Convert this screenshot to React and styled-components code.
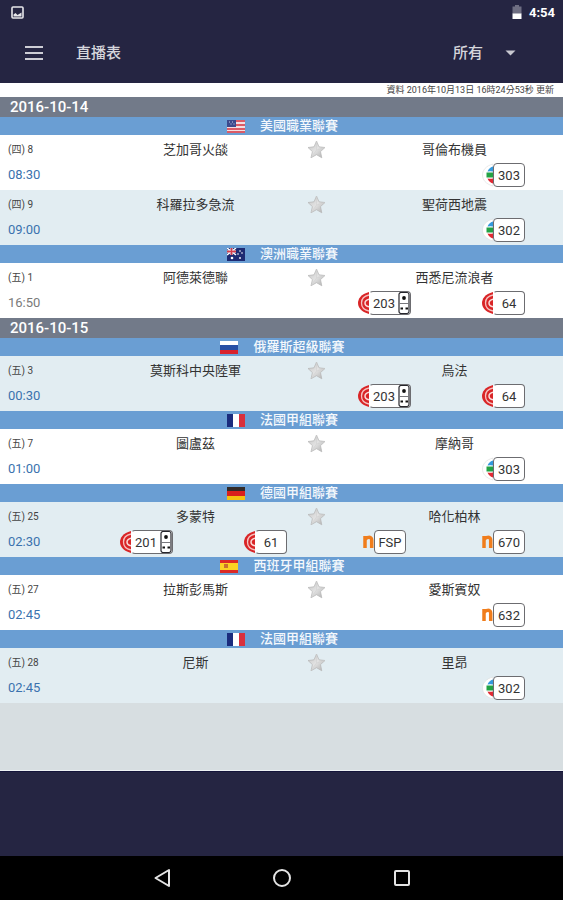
import React from "react";
import styled, { createGlobalStyle, css } from "styled-components";

const latin = `Roboto, "Noto Sans CJK TC", sans-serif`;

const GlobalStyle = createGlobalStyle`
  *, *::before, *::after { box-sizing: border-box; }
  body { margin: 0; background: #252542; font-family: ${latin}; }
  button, select { font: inherit; color: inherit; }
`;

const Page = styled.div`
  min-height: 100vh;
  display: flex;
  flex-direction: column;
  background: #252542;
`;

const StatusBar = styled.div`
  height: 24px;
  padding: 0 8px 0 11px;
  display: flex;
  align-items: center;
  justify-content: space-between;
  color: #fff;
`;

const StatusInfo = styled.div`
  display: flex;
  align-items: center;
  gap: 7px;
  font-size: 13px;
  font-weight: 700;
`;

const Toolbar = styled.header`
  height: 59px;
  padding: 0 47px 2px 24px;
  display: flex;
  align-items: center;
  color: #d6d6dc;
`;

const IconButton = styled.button`
  display: flex;
  align-items: center;
  justify-content: center;
  padding: 0;
  border: 0;
  background: none;
  cursor: pointer;
`;

const Title = styled.h1`
  flex: 1;
  margin: 0 0 0 32px;
  font-size: 15px;
  line-height: 20px;
  font-weight: 500;
`;

const Filter = styled.label`
  display: grid;
  grid-template-columns: 1fr auto;
  align-items: center;
  font-size: 15px;
  font-weight: 500;

  select {
    grid-area: 1 / 1 / 2 / 3;
    appearance: none;
    border: 0;
    padding: 0 32px 0 0;
    background: transparent;
    line-height: 20px;
    cursor: pointer;
  }
  option { color: #222; }
  svg { grid-area: 1 / 2; pointer-events: none; }
`;

const Content = styled.main`
  flex: 1;
  background: #d7dee1;
  border-bottom: 1px solid #eef2f3;
`;

const Updated = styled.p`
  height: 14px;
  margin: 0;
  padding: 0 9px;
  background: #fff;
  color: #444;
  font-size: 9px;
  line-height: 14px;
  text-align: right;
`;

const Schedule = styled.table`
  width: 100%;
  table-layout: fixed;
  border-collapse: collapse;

  td, th { padding: 0; }
`;

const InfoCol = styled.col`
  width: 87px;
`;

const StarCol = styled.col`
  width: 42px;
`;

const DateCell = styled.th`
  height: 20px;
  background: #727a89;
  color: #fff;
  font-size: 15px;
  line-height: 20px;
  font-weight: 500;
  text-align: left;

  && { padding-left: 10px; }
`;

const LeagueCell = styled.th`
  height: 18px;
  background: #6a9ed3;
  color: #f4f8fc;
  font-size: 13px;
  line-height: 18px;
  font-weight: 500;
`;

const LeagueName = styled.div`
  height: 18px;
  padding-left: 2px;
  display: flex;
  align-items: center;
  justify-content: center;
  gap: 15px;
`;

const Match = styled.tbody`
  background: ${(p) => (p.$tinted ? "#e2edf2" : "#fff")};
`;

const Number = styled.td`
  height: 28px;
  font-size: 10px;
  line-height: 26px;
  color: #444;

  && { padding: 2px 0 0 8px; }
`;

const Team = styled.td`
  height: 28px;
  font-size: 13px;
  line-height: 26px;
  color: #333;
  text-align: center;

  && { padding-top: 2px; }
`;

const StarCell = styled.td`
  height: 28px;
  vertical-align: middle;

  button { margin-left: 3px; }
`;

const Time = styled.td`
  height: 27px;
  font-size: 13px;
  line-height: 24px;
  vertical-align: top;
  color: ${(p) => (p.$past ? "#7a7a7a" : "#3a72ae")};

  && { padding-left: 8px; }
`;

const ChannelCell = styled.td`
  height: 27px;
  vertical-align: top;
`;

const Channels = styled.div`
  display: grid;
  grid-template-columns: repeat(4, 1fr);
  height: 27px;
  align-items: start;
`;

const columns = { 1: "4", 2: "3", 3: "2", 4: "1" };

const Channel = styled.span`
  grid-column-start: ${(p) => columns[p.$fromEnd]};
  grid-row: 1;
  display: flex;
  align-items: center;
  justify-content: center;
`;

const ChannelBox = styled.span`
  height: 24px;
  width: ${(p) => (p.$remote ? "42px" : "32px")};
  display: flex;
  align-items: center;
  border: 1px solid #6c6c70;
  border-radius: 4px;
  background: #fff;
  overflow: hidden;
  color: #333;
  font-size: 13px;

  span { flex: 1; text-align: center; }
  ${(p) =>
    p.$red &&
    css`
      border-left-color: #fff;
    `}
`;

const BottomPanel = styled.div`
  height: 85px;
  border-top: 1px solid #14143a;
`;

const NavBar = styled.nav`
  height: 44px;
  background: #000;
  display: flex;
  justify-content: center;

  button { width: 120px; }
`;

const Flag = ({ code }) => (
  <svg width="18" height="13" viewBox="0 0 18 13" aria-hidden="true">
    {code === "us" && (
      <>
        <rect width="18" height="13" fill="#f4dfe2" />
        {[0, 4, 8].map((y) => (
          <rect key={y} y={y} width="18" height="2" fill="#dc5b66" />
        ))}
        <rect y="11" width="18" height="2" fill="#dc5b66" />
        <rect width="9" height="7" fill="#3c4a8c" />
        <path d="M2 2h1M5 2h1M3.500 4h1M6.500 4h1" stroke="#c5cbe4" />
      </>
    )}
    {code === "au" && (
      <>
        <rect width="18" height="13" fill="#1d2a72" />
        <path d="M0 0L9 7M9 0L0 7" stroke="#fff" strokeWidth="1.500" />
        <path d="M4.500 0V7M0 3.500H9" stroke="#f3c6cc" strokeWidth="2.500" />
        <path d="M4.500 0V7M0 3.500H9" stroke="#d33d4b" strokeWidth="1.300" />
        <circle cx="5" cy="10" r="1.300" fill="#fff" />
        <circle cx="13" cy="3" r="0.800" fill="#fff" />
        <circle cx="11" cy="6" r="0.800" fill="#fff" />
        <circle cx="15" cy="5" r="0.800" fill="#fff" />
        <circle cx="13" cy="10" r="0.900" fill="#fff" />
      </>
    )}
    {code === "ru" && (
      <>
        <rect width="18" height="5" fill="#fff" />
        <rect y="4" width="18" height="5" fill="#2750a5" />
        <rect y="9" width="18" height="4" fill="#d9222c" />
      </>
    )}
    {code === "fr" && (
      <>
        <rect width="18" height="13" fill="#fff" />
        <rect width="6" height="13" fill="#1b2c7d" />
        <rect x="12" width="6" height="13" fill="#d9303d" />
      </>
    )}
    {code === "de" && (
      <>
        <rect width="18" height="5" fill="#332b28" />
        <rect y="4" width="18" height="5" fill="#da201c" />
        <rect y="9" width="18" height="4" fill="#f5c211" />
      </>
    )}
    {code === "es" && (
      <>
        <rect width="18" height="13" fill="#dc2a25" />
        <rect y="3" width="18" height="7" fill="#fbd324" />
        <rect x="4" y="4" width="4" height="4" fill="#c9722f" />
      </>
    )}
  </svg>
);

const Star = () => (
  <svg width="19" height="19" viewBox="0 0 19 19" aria-hidden="true">
    <defs>
      <linearGradient id="silver" x1="0" y1="0" x2="1" y2="1">
        <stop offset="0" stopColor="#c4c4c4" />
        <stop offset="0.5" stopColor="#e2e2e2" />
        <stop offset="1" stopColor="#adadad" />
      </linearGradient>
    </defs>
    <path
      d="M9.500 1L12 6.800L18 7.500L13.500 11.600L14.800 17.800L9.500 14.700L4 17.800L5.400 11.600L1 7.500L7 6.800Z"
      fill="url(#silver)"
      stroke="#b4b4b4"
      strokeWidth="0.700"
      strokeLinejoin="round"
    />
    <path d="M9.500 1L9.500 10L4 17.800M9.500 10L18 7.500" stroke="#cfcfcf" strokeWidth="0.500" fill="none" />
  </svg>
);

const Logo = ({ brand }) => (
  <svg width="11" height="24" viewBox="0 0 11 24" aria-hidden="true">
    {brand === "red" && (
      <>
        <path d="M11 1C3 3 0 8 0 12S3 21 11 23Z" fill="#d92527" />
        <path d="M11 4C6 5 3.500 8.500 3.500 12S6 19 11 20" fill="none" stroke="#f6c4c2" strokeWidth="1.300" />
        <path d="M12 8C8.500 8.500 7 10 7 12S8.500 15.500 12 16" fill="none" stroke="#fbdcda" strokeWidth="1.500" />
      </>
    )}
    {brand === "tvb" && (
      <>
        <path d="M11 1C3.500 3 0.500 7.500 0.500 12S3.500 21 11 23Z" fill="#fff" stroke="#dcdcdc" strokeWidth="0.600" />
        <path d="M11 3.500C8 4.500 6.500 6 5.500 8.500Q8 8 11 8.500Z" fill="#3499dc" />
        <path d="M4.500 9.500H11V14.500H4.500Z" fill="#22a244" />
        <path d="M5.500 15.500Q8 16 11 15.500V20.500C8 19.500 6.500 18 5.500 15.500Z" fill="#e02a34" />
      </>
    )}
    {brand === "n" && (
      <path
        d="M2 18V6M2 10C3 6.800 8.700 6.200 8.700 10V18"
        fill="none"
        stroke="#f07d1c"
        strokeWidth="3.500"
      />
    )}
  </svg>
);

const Remote = () => (
  <svg width="12" height="22" viewBox="0 0 12 22" aria-hidden="true">
    <rect x="1" y="0.500" width="10" height="21" rx="2" fill="#fff" stroke="#26262c" strokeWidth="1.200" />
    <path d="M1 11.500H11" stroke="#77777c" />
    <circle cx="6" cy="6" r="1.900" fill="#111" />
    <path d="M2.500 16.500h2.500M7.500 16.500h2.500" stroke="#111" strokeWidth="2" />
  </svg>
);

const ch = (brand, no, remote = false) => ({ brand, no, remote });

const days = [
  {
    date: "2016-10-14",
    leagues: [
      {
        name: "美國職業聯賽",
        flag: "us",
        matches: [
          { no: "(四) 8", time: "08:30", home: "芝加哥火燄", away: "哥倫布機員", channels: [ch("tvb", "303")] },
          { no: "(四) 9", time: "09:00", home: "科羅拉多急流", away: "聖荷西地震", channels: [ch("tvb", "302")], tinted: true },
        ],
      },
      {
        name: "澳洲職業聯賽",
        flag: "au",
        matches: [
          { no: "(五) 1", time: "16:50", past: true, home: "阿德萊德聯", away: "西悉尼流浪者", channels: [ch("red", "203", true), ch("red", "64")] },
        ],
      },
    ],
  },
  {
    date: "2016-10-15",
    leagues: [
      {
        name: "俄羅斯超級聯賽",
        flag: "ru",
        matches: [
          { no: "(五) 3", time: "00:30", home: "莫斯科中央陸軍", away: "烏法", channels: [ch("red", "203", true), ch("red", "64")], tinted: true },
        ],
      },
      {
        name: "法國甲組聯賽",
        flag: "fr",
        matches: [{ no: "(五) 7", time: "01:00", home: "圖盧茲", away: "摩納哥", channels: [ch("tvb", "303")] }],
      },
      {
        name: "德國甲組聯賽",
        flag: "de",
        matches: [
          {
            no: "(五) 25",
            time: "02:30",
            home: "多蒙特",
            away: "哈化柏林",
            channels: [ch("red", "201", true), ch("red", "61"), ch("n", "FSP"), ch("n", "670")],
            tinted: true,
          },
        ],
      },
      {
        name: "西班牙甲組聯賽",
        flag: "es",
        matches: [{ no: "(五) 27", time: "02:45", home: "拉斯彭馬斯", away: "愛斯賓奴", channels: [ch("n", "632")] }],
      },
      {
        name: "法國甲組聯賽",
        flag: "fr",
        matches: [{ no: "(五) 28", time: "02:45", home: "尼斯", away: "里昂", channels: [ch("tvb", "302")], tinted: true }],
      },
    ],
  },
];

const MatchRows = ({ match }) => (
  <Match $tinted={match.tinted}>
    <tr>
      <Number>{match.no}</Number>
      <Team>{match.home}</Team>
      <StarCell>
        <IconButton type="button" aria-label="收藏">
          <Star />
        </IconButton>
      </StarCell>
      <Team>{match.away}</Team>
    </tr>
    <tr>
      <Time $past={match.past}>{match.time}</Time>
      <ChannelCell colSpan={3}>
        <Channels>
          {match.channels.map((c, i) => (
            <Channel key={c.brand + c.no} $fromEnd={match.channels.length - i}>
              <Logo brand={c.brand} />
              <ChannelBox $remote={c.remote} $red={c.brand === "red"}>
                <span>{c.no}</span>
                {c.remote && <Remote />}
              </ChannelBox>
            </Channel>
          ))}
        </Channels>
      </ChannelCell>
    </tr>
  </Match>
);

export default function App() {
  return (
    <Page>
      <GlobalStyle />
      <StatusBar>
        <svg width="13" height="13" viewBox="0 0 13 13" aria-hidden="true">
          <rect x="1" y="1" width="11" height="11" rx="1" fill="none" stroke="#e6e6ea" strokeWidth="1.600" />
          <path d="M2.500 10.500V8.500L4.500 7L6.500 9L10.500 6.500V10.500Z" fill="#e6e6ea" />
        </svg>
        <StatusInfo>
          <svg width="10" height="14" viewBox="0 0 10 14" aria-hidden="true">
            <path d="M3 0H7V1.500H9.500V9H0.500V1.500H3Z" fill="#6e6e82" />
            <path d="M0.500 8.500H9.500V14H0.500Z" fill="#fff" />
          </svg>
          <span>4:54</span>
        </StatusInfo>
      </StatusBar>
      <Toolbar>
        <IconButton type="button" aria-label="選單">
          <svg width="20" height="14" viewBox="0 0 20 14" fill="none" stroke="#cdcdd5" strokeWidth="2" aria-hidden="true">
            <path d="M1 1H19M1 7H19M1 13H19" />
          </svg>
        </IconButton>
        <Title>直播表</Title>
        <Filter>
          <select aria-label="篩選" defaultValue="all">
            <option value="all">所有</option>
          </select>
          <svg width="11" height="6" viewBox="0 0 11 6" aria-hidden="true">
            <path d="M0.500 0.500H10.500L5.500 5.500Z" fill="#c8c8d0" />
          </svg>
        </Filter>
      </Toolbar>
      <Content>
        <Updated>資料 2016年10月13日 16時24分53秒 更新</Updated>
        <Schedule aria-label="直播表">
          <colgroup>
            <InfoCol />
            <col />
            <StarCol />
            <col />
          </colgroup>
          {days.map((day) => (
            <React.Fragment key={day.date}>
              <tbody>
                <tr>
                  <DateCell colSpan={4}>{day.date}</DateCell>
                </tr>
              </tbody>
              {day.leagues.map((league) => (
                <React.Fragment key={league.name}>
                  <tbody>
                    <tr>
                      <LeagueCell colSpan={4}>
                        <LeagueName>
                          <Flag code={league.flag} />
                          <span>{league.name}</span>
                        </LeagueName>
                      </LeagueCell>
                    </tr>
                  </tbody>
                  {league.matches.map((m) => (
                    <MatchRows key={m.no} match={m} />
                  ))}
                </React.Fragment>
              ))}
            </React.Fragment>
          ))}
        </Schedule>
      </Content>
      <BottomPanel />
      <NavBar>
        <IconButton type="button" aria-label="返回">
          <svg width="18" height="20" viewBox="0 0 18 20" fill="none" stroke="#e4e4e4" strokeWidth="2" strokeLinejoin="round" aria-hidden="true">
            <path d="M2.500 10L16 2V18Z" />
          </svg>
        </IconButton>
        <IconButton type="button" aria-label="主畫面">
          <svg width="20" height="20" viewBox="0 0 20 20" fill="none" stroke="#e4e4e4" strokeWidth="2" aria-hidden="true">
            <circle cx="10" cy="10" r="8" />
          </svg>
        </IconButton>
        <IconButton type="button" aria-label="最近使用">
          <svg width="18" height="18" viewBox="0 0 18 18" fill="none" stroke="#e4e4e4" strokeWidth="2" aria-hidden="true">
            <rect x="2" y="2" width="14" height="14" rx="1" />
          </svg>
        </IconButton>
      </NavBar>
    </Page>
  );
}
